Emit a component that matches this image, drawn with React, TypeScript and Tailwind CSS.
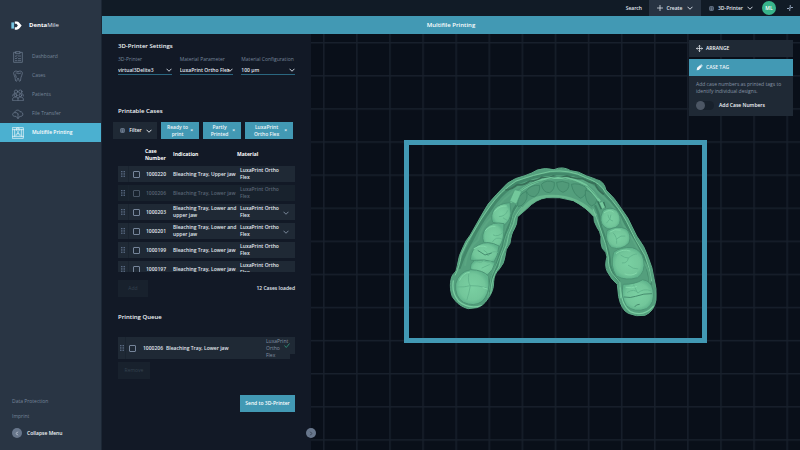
import { useId } from "react";
import type { ReactNode } from "react";
import clsx from "clsx";

// ICONS

const Chevron = ({ className }: { className?: string }) => (
  <svg
    viewBox="0 0 12 8"
    className={clsx("h-1 w-1.5 shrink-0", className)}
    fill="none"
    stroke="currentColor"
    strokeWidth="1.8"
  >
    <path d="M1 1.5 6 6.5 11 1.5" />
  </svg>
);

const PrinterIcon = () => (
  <svg
    viewBox="0 0 12 12"
    className="size-[5px] shrink-0 text-slate-400"
    fill="none"
    stroke="currentColor"
    strokeWidth="1.6"
  >
    <rect x="1.5" y="1" width="9" height="10" rx="2" />
    <path d="M3 4h6M4 6.3h4v2.2H4z" />
  </svg>
);

const DragHandle = () => (
  <svg
    viewBox="0 0 9 14"
    className="mx-auto h-1.5 w-1 text-slate-500"
    fill="currentColor"
  >
    {[0, 4, 8, 12].map((y) => (
      <g key={y}>
        <rect x="0" y={y} width="2.2" height="2.2" />
        <rect x="3.4" y={y} width="2.2" height="2.2" />
        <rect x="6.8" y={y} width="2.2" height="2.2" />
      </g>
    ))}
  </svg>
);

const NavIcon = ({ children }: { children: ReactNode }) => (
  <svg
    viewBox="0 0 36 36"
    className="size-3 shrink-0"
    fill="none"
    stroke="currentColor"
    strokeWidth="2"
    strokeLinejoin="round"
    strokeLinecap="round"
  >
    {children}
  </svg>
);

const navItems = [
  {
    label: "Dashboard",
    icon: (
      <NavIcon>
        <path d="M12 4H5v30h26V4h-7M12 2h12v6H12z" />
        <path d="M10 15l2 2 3-4M19 15h7M10 22l2 2 3-4M19 23h7M10 29h5M19 29h7" />
      </NavIcon>
    ),
  },
  {
    label: "Cases",
    icon: (
      <NavIcon>
        <path d="M18 5c-4-3-13-3-13 5 0 5 3 7 4 12s1 12 4 12 2-10 5-10 2 10 5 10 3-7 4-12 4-7 4-12c0-8-9-8-13-5z" />
        <path d="M12 9c3-1 5 2 8 2s4-2 6-2M10 14c1 3 3 5 3 8" />
      </NavIcon>
    ),
  },
  {
    label: "Patients",
    icon: (
      <NavIcon>
        <circle cx="12" cy="8" r="5" />
        <circle cx="25" cy="8" r="5" />
        <circle cx="11" cy="19" r="4" />
        <circle cx="25" cy="19" r="4" />
        <path d="M2 34v-4c0-4 4-6 9-6s7 2 7 5c0-3 3-5 7-5s9 2 9 6v4zM18 29v5M2 21c0-5 3-8 6-8M34 21c0-5-2-8-5-8" />
      </NavIcon>
    ),
  },
  {
    label: "File Transfer",
    icon: (
      <NavIcon>
        <path d="M11 25H8c-8 0-8-11 0-11C9 5 22 4 24 11c9-1 13 14 2 14h-2" />
        <path d="M10 14c4-1 7 1 8 4M18 18v13M13 26l5 6 5-6" />
      </NavIcon>
    ),
  },
  {
    label: "Multifile Printing",
    active: true,
    icon: (
      <NavIcon>
        <path d="M2 2h32v32H2zM2 8h32M2 28h32M8 8v20M28 8v20" />
        <path d="M15 3h6v8l-3 3-3-3zM12 25c0-9 12-9 12 0M18 16v6" />
      </NavIcon>
    ),
  },
];

const filters = ["Ready to print", "Partly Printed", "LuxaPrint Ortho Flex"];

const cases = [
  { no: "1000220", indication: "Bleaching Tray, Upper jaw" },
  { no: "1000206", indication: "Bleaching Tray, Lower jaw", disabled: true },
  {
    no: "1000203",
    indication: "Bleaching Tray, Lower and\nupper jaw",
    expandable: true,
  },
  {
    no: "1000201",
    indication: "Bleaching Tray, Lower and\nupper jaw",
    expandable: true,
  },
  { no: "1000199", indication: "Bleaching Tray, Lower jaw" },
  { no: "1000197", indication: "Bleaching Tray, Lower jaw" },
];

// SIDEBAR

const Sidebar = () => (
  <aside className="flex w-[102px] shrink-0 flex-col border-r border-[#1c2735] bg-[#293544] text-[#76859a]">
    <div className="mt-5 flex h-[10px] items-center gap-[7px] pl-[11px]">
      <svg viewBox="0 0 32 26" className="h-[9px] w-[11px]">
        <path d="M1 4h8v18H1z" fill="#76c5e2" />
        <path
          d="M11 1h6c6 0 8 5 14 12-6 7-8 12-14 12h-6v-7h5l4-5-4-5h-5z"
          fill="#fff"
        />
      </svg>
      <span className="text-[6px] leading-[8px] text-slate-200">
        <b className="font-bold text-white">Denta</b>Mile
      </span>
    </div>

    <nav className="mt-[17px] flex flex-col">
      {navItems.map(({ label, icon, active }) => (
        <a
          key={label}
          href="#"
          className={clsx(
            "flex h-[19px] items-center gap-2 pl-3",
            active && "bg-[#4bb0d0] font-semibold text-white"
          )}
        >
          {icon}
          {label}
        </a>
      ))}
    </nav>

    <div className="mt-auto flex flex-col gap-2 pb-3 pl-3">
      <a href="#">Data Protection</a>
      <a href="#">Imprint</a>
      <button className="flex items-center gap-[5px] font-semibold text-slate-100">
        <span className="flex size-[10px] items-center justify-center rounded-full bg-[#68778c]">
          <Chevron className="h-[3px] w-1 rotate-90" />
        </span>
        Collapse Menu
      </button>
    </div>
  </aside>
);

// TOP BAR

const TopBar = () => (
  <header className="flex h-4 items-stretch justify-end bg-[#111b26] font-semibold text-slate-200">
    <button className="px-[7px]">Search</button>
    <button className="flex w-[52px] items-center justify-center gap-1 bg-[#273342]">
      <svg
        viewBox="0 0 12 12"
        className="size-[6px]"
        stroke="currentColor"
        strokeWidth="1.5"
      >
        <path d="M6 0v12M0 6h12" />
      </svg>
      Create
      <Chevron className="ml-px" />
    </button>
    <button className="flex w-[61px] items-center gap-1 pl-2">
      <PrinterIcon />
      3D-Printer
      <Chevron />
    </button>
    <button className="flex size-[14px] items-center justify-center self-center rounded-full bg-[#38b48b] text-white">
      ML
    </button>
    <button aria-label="Activity" className="pr-[7px] pl-[11px]">
      <svg
        viewBox="0 0 12 12"
        className="size-[6px] text-slate-400"
        fill="none"
        stroke="currentColor"
        strokeWidth="2"
      >
        <path d="M0 7h4L6.500 4V0M5.500 12V8l2-3H12" />
      </svg>
    </button>
  </header>
);

// SETTINGS PANEL

const Field = ({ label, value }: { label: string; value: string }) => {
  const id = useId();

  return (
    <div>
      <label htmlFor={id} className="block whitespace-nowrap text-[#76859a]">
        {label}
      </label>
      <div className="relative mt-[3px] text-slate-200">
        <select
          id={id}
          className="block h-[9px] w-full appearance-none border-b border-[#2a6780] bg-transparent leading-[8px] font-semibold"
        >
          <option>{value}</option>
        </select>
        <Chevron className="pointer-events-none absolute top-0.5 right-0" />
      </div>
    </div>
  );
};

const Checkbox = ({ label, disabled }: { label: string; disabled?: boolean }) => (
  <input
    type="checkbox"
    aria-label={label}
    disabled={disabled}
    className="block size-[7px] shrink-0 appearance-none rounded-[1px] border border-[#76859a]"
  />
);

const CasesTable = () => (
  <div className="-mt-px h-[129px] overflow-hidden">
    <table className="w-full table-fixed border-separate border-spacing-x-0 border-spacing-y-[3px] text-left font-semibold text-slate-200">
      <thead>
        <tr className="h-[17px] text-white">
          <th className="w-[11px]" />
          <th className="w-4" />
          <th className="w-7 pr-1">Case Number</th>
          <th className="w-16">Indication</th>
          <th className="w-[46px]">Material</th>
          <th />
        </tr>
      </thead>
      <tbody>
        {cases.map(({ no, indication, disabled, expandable }) => (
          <tr
            key={no}
            className={clsx(
              "h-4 bg-[#1f2935] align-middle",
              disabled && "bg-[#18222d] text-[#596474]"
            )}
          >
            <td className="border-r border-[#1a2430]">
              <DragHandle />
            </td>
            <td className={clsx("pl-1", disabled && "opacity-50")}>
              <Checkbox label={`Select case ${no}`} disabled={disabled} />
            </td>
            <td className="pl-px">{no}</td>
            <td className="whitespace-pre">{indication}</td>
            <td className="pl-[3px]">LuxaPrint Ortho Flex</td>
            <td>
              {expandable && (
                <button
                  aria-label={`Expand case ${no}`}
                  className="flex pt-px text-[#8593a6]"
                >
                  <Chevron />
                </button>
              )}
            </td>
          </tr>
        ))}
      </tbody>
    </table>
  </div>
);

const PrintingQueue = () => (
  <ul>
    <li className="flex items-start">
      <div className="flex h-[22px] min-w-0 flex-1 items-center bg-[#1f2935] font-semibold text-slate-200">
        <div className="flex h-full w-2 items-center border-r border-[#1a2430]">
          <DragHandle />
        </div>
        <div className="pr-[7px] pl-[3px]">
          <Checkbox label="Select queued case 1000206" />
        </div>
        <span>1000206</span>
        <span className="ml-[3px]">Bleaching Tray, Lower jaw</span>
        <span className="ml-auto w-6 font-normal text-[#8491a3]">
          LuxaPrint Ortho Flex
        </span>
      </div>
      <div className="relative h-[17px] w-[5px] bg-[#1f2935]">
        <svg
          viewBox="0 0 12 10"
          className="absolute top-[6px] right-[5px] h-[5px] w-[6px]"
          fill="none"
          stroke="#2f8f76"
          strokeWidth="1.8"
        >
          <path d="M1 5l3.500 4L11 1" />
        </svg>
      </div>
    </li>
  </ul>
);

const SettingsPanel = () => (
  <section className="relative w-[209px] shrink-0 bg-[#121926] px-4">
    <h2 className="mt-2 text-[6px] leading-[8px] font-semibold text-slate-100">
      3D-Printer Settings
    </h2>
    <div className="mt-[6px] grid grid-cols-3 gap-2">
      <Field label="3D-Printer" value="virtual3Delite3" />
      <Field label="Material Parameter" value="LuxaPrint Ortho Flex" />
      <Field label="Material Configuration" value="100 µm" />
    </div>

    <h2 className="mt-8 text-[6px] leading-[8px] font-semibold text-slate-100">
      Printable Cases
    </h2>
    <div className="mt-[7px] -ml-[5px] flex h-[17px] gap-1 font-semibold text-slate-100">
      <button className="flex w-[44px] items-center justify-center gap-1 bg-[#1f2935] pl-0.5">
        <PrinterIcon />
        Filter
        <Chevron />
      </button>
      {filters.map((filter) => (
        <button
          key={filter}
          className="flex w-[38px] items-center justify-between bg-[#4299b4] pr-1.5 pl-1 last:w-12"
        >
          <span className="flex-1 px-px">{filter}</span>
          <span>×</span>
        </button>
      ))}
    </div>
    <div className="mt-[5px]">
      <CasesTable />
    </div>

    <div className="mt-2 flex items-center justify-between">
      <button disabled className="h-[17px] w-[30px] bg-[#18212d] text-[#354150]">
        Add
      </button>
      <span className="font-semibold text-slate-200">12 Cases loaded</span>
    </div>

    <h2 className="my-4 text-[6px] leading-[8px] font-semibold text-slate-100">
      Printing Queue
    </h2>
    <PrintingQueue />
    <button
      disabled
      className="mt-[3px] block h-[17px] w-8 bg-[#18212d] text-[#354150]"
    >
      Remove
    </button>
    <button className="mt-4 ml-auto block h-[17px] w-[55px] bg-[#4299b4] font-semibold text-white">
      Send to 3D-Printer
    </button>

    <button
      aria-label="Collapse panel"
      className="absolute -right-[5px] bottom-3 z-10 flex size-[10px] items-center justify-center rounded-full bg-[#68778c] text-[#1f2935]"
    >
      <Chevron className="h-[3px] w-1 -rotate-90" />
    </button>
  </section>
);

// BUILD PLATFORM

const trayOutline =
  "M205 521C185 516 170 505 157 485C149 465 149 435 158 420Q171 410 172 392Q176 360 190 335Q196 318 211 300L245 240Q262 205 290 178L322 145Q345 128 375 122Q398 114 412 105Q435 97 462 104Q488 92 512 107Q535 108 560 123Q580 129 590 134Q612 138 618 165Q645 190 660 215L684 250Q696 275 710 303Q735 335 745 368Q758 398 762 430Q771 460 768 495Q763 529 735 541Q710 546 685 535Q664 525 656 485L652 448Q636 436 622 410Q613 392 621 366Q621 352 607 340Q601 325 603 305Q601 290 590 275Q580 258 582 245Q558 217 520 197Q478 184 440 188Q408 192 380 222L352 246Q352 268 342 284Q334 295 330 325Q315 343 315 365Q313 385 298 402Q282 417 281 440Q282 468 263 492Q250 513 230 518Z";

const leftTeeth = [
  "M330 203Q298 205 283 222Q270 242 278 262L312 271Q330 258 333 235Z",
  "M312 266Q277 258 257 280Q243 300 251 321L292 343Q308 325 311 300Z",
  "M297 333Q263 314 235 330Q213 343 211 375L280 385Q295 362 297 333Z",
  "M286 382Q252 371 224 376Q207 388 213 405L262 421Q280 405 286 382Z",
  "M266 424Q250 405 212 404Q176 410 167 447Q164 486 190 502Q222 517 247 499Q266 478 267 450Z",
];

const rightTeeth = [
  "M609 226Q630 213 650 226Q665 244 659 266Q645 287 622 281Q599 271 603 244Z",
  "M621 287Q651 269 679 282Q696 298 687 324Q665 347 635 338Q614 319 621 287Z",
  "M641 352Q660 335 697 338Q725 345 731 375Q738 411 713 428Q678 439 649 423Q629 393 641 352Z",
  "M669 448Q706 448 728 434Q754 438 759 465Q766 505 740 521Q704 535 679 512Q662 485 669 448Z",
];

const frontTeeth = [
  "M353 215Q350 181 378 169Q389 190 366 211Z",
  "M379 168Q393 148 419 151Q421 175 404 185Q386 186 379 168Z",
  "M424 148Q440 132 463 142Q465 165 449 173Q429 174 424 148Z",
  "M470 142Q486 135 507 145Q508 166 489 172Q471 167 470 142Z",
  "M514 148Q533 142 559 157Q562 181 542 190Q520 179 514 148Z",
  "M556 166Q575 167 591 194Q589 209 575 213Q554 203 556 166Z",
];

const Tray = () => (
  <g transform="translate(400 135) scale(.3333)" strokeLinejoin="round">
    <path d={trayOutline} fill="#549f7d" stroke="#5dab87" strokeWidth="3" />

    <g clipPath="url(#tray)">
      <g filter="url(#shade)">
        {/* outer wall */}
        <g fill="none" strokeLinecap="round">
          <path
            d="M178 398Q195 350 216 315Q235 273 270 225Q300 175 350 145Q400 124 455 117Q535 113 590 151Q631 190 663 243Q700 300 730 365Q747 405 752 450"
            stroke="#43886a"
            strokeWidth="9"
          />
          <path
            d="M166 420Q182 385 183 360Q200 319 220 292Q240 255 269 215Q300 170 348 138Q400 119 452 109Q510 103 557 128Q604 144 617 174Q660 221 680 260Q705 315 735 362Q750 400 755 438"
            stroke="#75c79b"
            strokeWidth="3"
          />
          <path
            d="M195 390Q203 339 235 315Q243 276 276 247Q293 205 331 177Q350 153 400 135Q455 120 520 127Q572 140 607 184Q653 220 671 273Q710 325 728 374Q750 405 750 442"
            stroke="#5aa682"
            strokeWidth="6"
          />
          <path
            d="M318 165q20-3 34-16q20 3 37-11q22 1 36-11q17 5 35-4q20 6 41 0q22 10 47 8q18 12 38 15q5 18 24 31"
            stroke="#376f58"
            strokeWidth="5"
          />
          <path
            d="M160 438Q154 473 176 499Q205 524 246 512M661 459Q665 512 691 530Q732 547 760 514"
            stroke="#79cda0"
            strokeWidth="4"
          />
        </g>

        {/* front band */}
        <path
          d="M351 245Q379 184 435 180Q532 172 592 240L579 247Q535 199 485 188H435Q403 195 375 225Z"
          fill="#68b78e"
        />
        {frontTeeth.map((d) => (
          <path
            key={d}
            d={d}
            fill="#519a79"
            stroke="#3f8567"
            strokeWidth="2.5"
          />
        ))}
        <path
          d="M333 203Q347 172 388 151Q426 129 475 128Q527 130 558 151Q579 170 600 199"
          fill="none"
          stroke="#73c79b"
          strokeWidth="7"
        />
        <path
          d="M355 172Q395 139 432 137L474 124L525 139L566 157L596 190"
          fill="none"
          stroke="#4b9473"
          strokeWidth="2"
        />
        <path
          d="M329 198L344 164L365 169L349 207Z"
          fill="#73c89b"
          stroke="#4f9c79"
          strokeWidth="2"
        />

        {/* inner walls */}
        <g fill="none">
          <path
            d="M350 211Q335 231 333 261Q315 295 309 334Q294 370 287 406Q267 430 267 472"
            stroke="#42886a"
            strokeWidth="8"
          />
          <path
            d="M367 216Q343 239 341 265Q322 300 320 329Q302 365 297 395Q274 426 272 478"
            stroke="#74c69b"
            strokeWidth="3"
          />
          <path
            d="M353 214Q337 238 337 251L328 280Q313 310 311 333L291 386L274 425L263 488"
            stroke="#62b38b"
            strokeWidth="3"
          />
          <path
            d="M585 211Q602 246 603 275Q615 304 620 333Q630 363 630 390Q641 425 659 441"
            stroke="#42886a"
            strokeWidth="7"
          />
          <path
            d="M579 221Q590 251 600 278L617 329L625 366Q624 397 637 416L660 443L662 490"
            stroke="#74c69b"
            strokeWidth="3"
          />
          <path
            d="M593 199l11 24M611 201l5 17"
            stroke="#347158"
            strokeWidth="4"
          />
          <path d="M603 202l8 17" stroke="#74c99c" strokeWidth="9" />
        </g>

        {/* chewing surfaces */}
        {[...leftTeeth, ...rightTeeth].map((d) => (
          <path
            key={d}
            d={d}
            fill="url(#tooth)"
            stroke="#4b9574"
            strokeWidth="3"
          />
        ))}
        <g fill="none" stroke="#63b68e" strokeWidth="3" strokeLinecap="round">
          <path d="M298 245q19-1 25-18M310 249l13 8M280 300q14 8 29-8M278 320q10-17 27-8M252 346q10 3 12 17q14-19 29-11M229 379q15 7 21-2q12 7 23 3M246 399l22-10M206 418q-3 24 5 34q-18 5-38 4M211 452q22-1 48 6M211 452q-4 24-10 42" />
          <path d="M624 240q2 15 14 18M620 264q14-13 13-24M640 294q12 12 10 31M651 311q12-12 24-8M663 361q11 8 22 8q-2 16-18 15M685 369q16-13 25-12M685 391q14 12 29 11M682 472q22-13 32 2q16-15 38-7M701 450l12 24" />
        </g>
        <path
          d="M672 486q20 4 35-2q25-9 49-8M704 516q4-8 15-8M233 346l22 14l20-6"
          fill="none"
          stroke="#468d6e"
          strokeWidth="3"
        />
        <g fill="none" stroke="#84d8aa" strokeWidth="3" strokeLinecap="round">
          <path d="M284 229q15-18 35-16M256 287q12-15 29-13M222 341q20-13 37-5M179 436q9-22 29-24M249 458l12 4M613 233q15-12 27-2M630 291q15-11 31-6M649 355q20-15 41-7M678 457q18 4 32-2M675 417q19 8 35-3" />
        </g>
      </g>
    </g>
  </g>
);

const BuildPlatform = () => (
  <svg
    viewBox="311 34 489 416"
    preserveAspectRatio="xMidYMid slice"
    className="absolute inset-0 size-full"
    role="img"
    aria-label="Build platform"
  >
    <defs>
      <pattern
        id="grid"
        x="323"
        y="42"
        width="33.1"
        height="33.1"
        patternUnits="userSpaceOnUse"
      >
        <path d="M.8 0v33.1M0 .8h33.1" stroke="#18202c" strokeWidth="1.4" />
      </pattern>
      <radialGradient id="tooth">
        <stop offset="0" stopColor="#7ad0a2" />
        <stop offset=".75" stopColor="#72c69a" />
        <stop offset="1" stopColor="#60b48c" />
      </radialGradient>
      <clipPath id="tray">
        <path d={trayOutline} />
      </clipPath>
      <filter id="shade">
        <feGaussianBlur stdDeviation="1.2" />
      </filter>
    </defs>
    <rect x="311" y="34" width="489" height="416" fill="url(#grid)" />
    <rect
      x="406.500"
      y="142.500"
      width="298"
      height="198"
      fill="none"
      stroke="#4299b4"
      strokeWidth="5"
    />
    <Tray />
  </svg>
);

const ToolPanel = () => (
  <div className="absolute top-[6px] right-[7px] w-[104px] text-slate-100">
    <button className="flex h-[17px] w-full items-center gap-[3px] bg-[#1f2935] pl-[7px] font-semibold">
      <svg
        viewBox="0 0 20 20"
        className="size-[7px]"
        fill="none"
        stroke="currentColor"
        strokeWidth="2"
      >
        <path d="M10 1v18M1 10h18M7 4l3-3 3 3M7 16l3 3 3-3M4 7l-3 3 3 3M16 7l3 3-3 3" />
      </svg>
      ARRANGE
    </button>
    <button className="mt-0.5 flex h-[17px] w-full items-center gap-[3px] bg-[#4299b4] pl-[7px] font-semibold">
      <svg viewBox="0 0 20 20" className="size-[7px]" fill="currentColor">
        <path d="M2 18l1-7 9-8 5 5-9 9zM13 2l2-1 4 4-1 2z" />
      </svg>
      CASE TAG
    </button>
    <div className="bg-[#1f2935] px-[7px] pt-[5px] pb-1.5">
      <p className="text-[#8794a6]">
        Add case numbers as printed tags to identify individual designs.
      </p>
      <label className="mt-1.5 flex items-center gap-[5px] font-semibold">
        <input
          type="checkbox"
          role="switch"
          className="h-[9px] w-[18px] appearance-none rounded-full bg-[#18212c] before:block before:size-[9px] before:rounded-full before:bg-[#4c5664]"
        />
        Add Case Numbers
      </label>
    </div>
  </div>
);

const App = () => (
  <div className="flex min-h-screen bg-[#090f19] font-['Open_Sans','Noto_Sans',sans-serif] text-[5px] leading-[7px]">
    <Sidebar />
    <div className="flex min-w-0 flex-1 flex-col">
      <TopBar />
      <h1 className="flex h-[18px] items-center justify-center bg-[#4299b4] text-[6px] font-semibold text-white">
        Multifile Printing
      </h1>
      <main className="flex flex-1">
        <SettingsPanel />
        <div className="relative min-w-0 flex-1 overflow-hidden">
          <BuildPlatform />
          <ToolPanel />
        </div>
      </main>
    </div>
  </div>
);

export default App;
